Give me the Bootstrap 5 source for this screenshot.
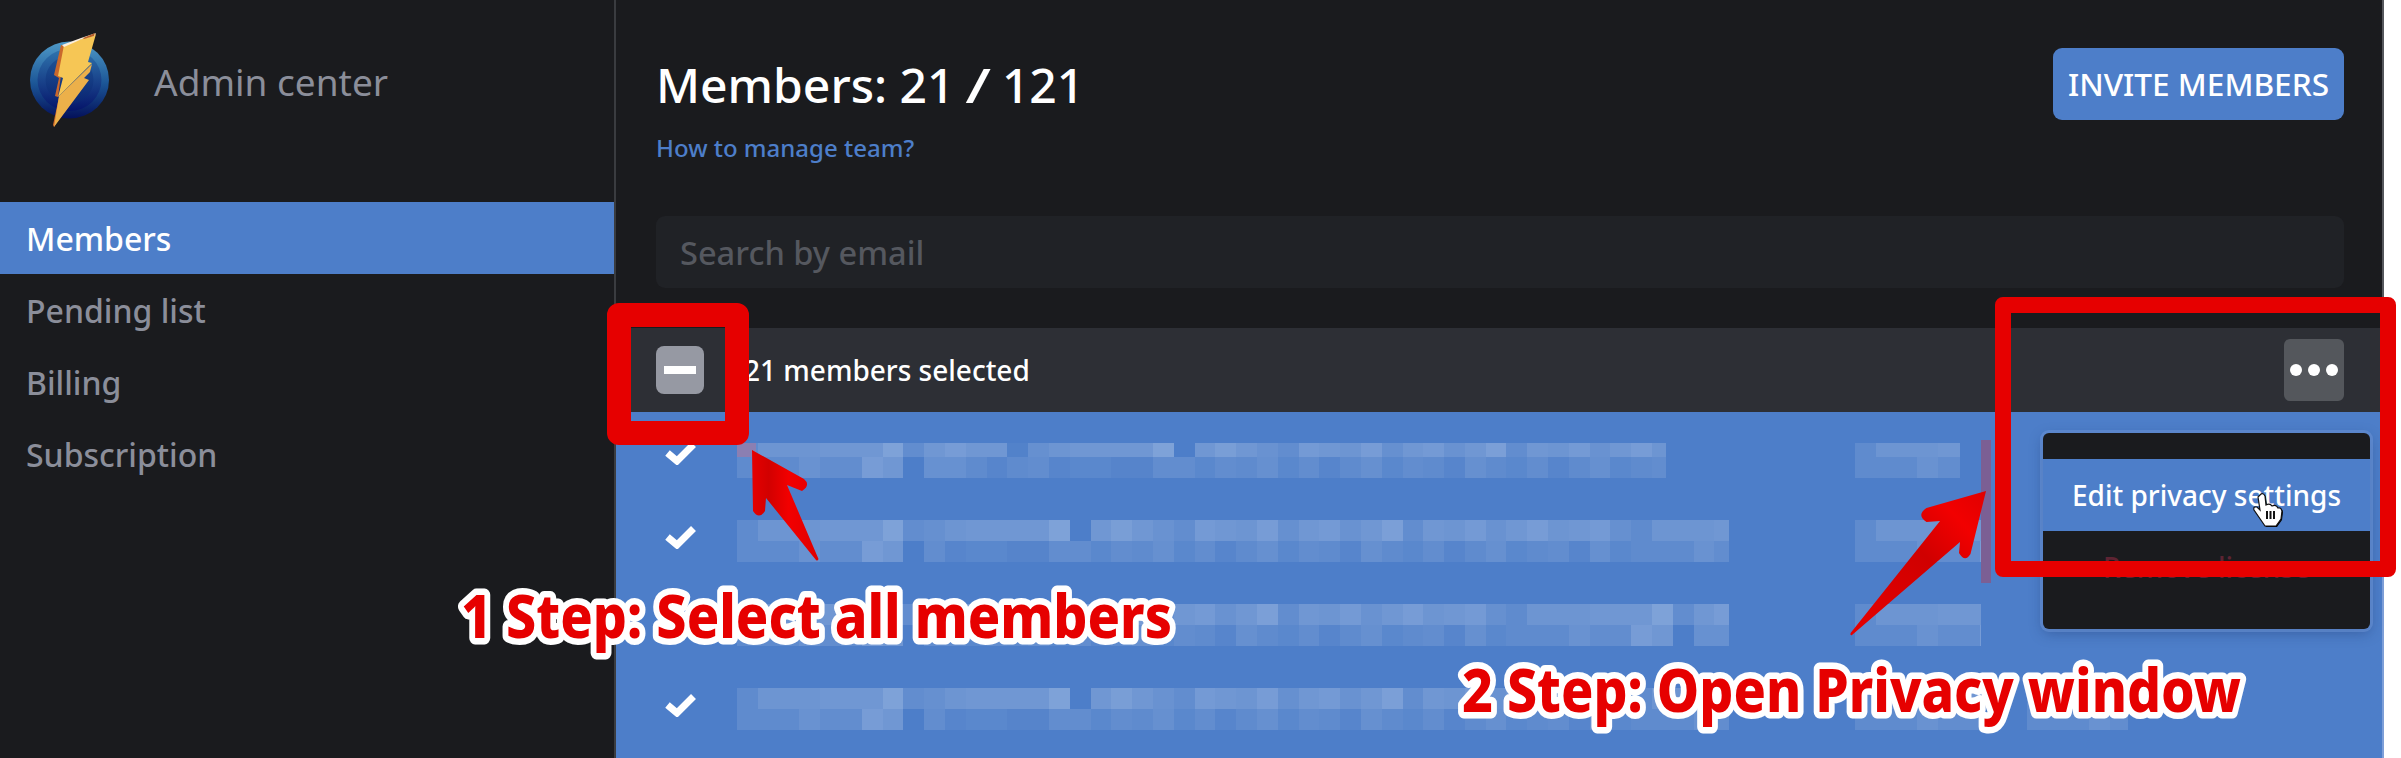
<!doctype html>
<html lang="en">
<head>
<meta charset="utf-8">
<title>Admin center</title>
<link href="https://cdn.jsdelivr.net/npm/bootstrap@5.3.0/dist/css/bootstrap.min.css" rel="stylesheet">
<style>
html,body{height:758px;background:#fff;overflow:hidden}
body{font-family:"Noto Sans","Liberation Sans",sans-serif;position:relative}
.app-shell{width:2384px;height:758px;background:#1a1b1e;overflow:hidden}
.side-col{width:616px;flex:none;border-right:2px solid #3a3c40}
.brand-row{height:202px}
.brand-name{font-size:37px;line-height:54px;color:#8b8e9a;margin:55px 0 0 4px}
.side-nav .nav-link{height:72px;line-height:74px;padding:0 26px;font-size:32px;font-weight:500;color:#8b8e9a;border-radius:0}
.side-nav .nav-link.active{background:#4d7ec9;color:#fff}
.main-col{flex:1 1 auto;min-width:0;border-right:2px solid #55575c;position:relative}
.head-row{padding:48px 38px 0 40px}
.page-title{font-size:48px;line-height:72px;font-weight:500;color:#fff;margin:1px 0 9px}
.title-slash{display:inline-block;transform:scaleX(1.4);margin:0 2px}
.help-link{display:block;font-size:24px;line-height:36px;font-weight:500;color:#4d7ec9;text-decoration:none}
.invite-btn{width:291px;height:72px;padding:0;font-size:31.6px;line-height:1;font-weight:500;color:#fff;background:#4d7ec9;border:0;border-radius:9px;white-space:nowrap}
.search-wrap{margin:50px 38px 0 40px}
.search-box.form-control{height:72px;background:#202226;border:0;border-radius:9px;padding:0 24px;font-size:32.6px;color:#fff}
.search-box.form-control::placeholder{color:#55585f;opacity:1;font-weight:500}
.select-bar{height:84px;margin-top:40px;background:#2d2f35;padding:0 38px 0 40px}
.master-check{width:48px;height:48px;background:#9699a3;border-radius:8px;flex:none}
.master-check i{display:block;width:32px;height:8px;background:#fff}
.select-text{font-size:28px;font-weight:500;color:#fff;margin-left:40px}
.more-btn{width:60px;height:62px;background:#54575c;border:0;border-radius:6px;gap:6px;padding:0}
.more-btn i{display:block;width:12px;height:12px;border-radius:50%;background:#fff}
.member-list{background:#4d7ec9;height:346px;margin-right:-2px;border-right:2px solid #7e9fd8}
.member-row{height:84px}
.check-cell{width:121px;flex:none;padding:29px 0 0 48px}
.check-cell svg{display:block}
.blur-cell{flex:none;padding-top:24px;overflow:hidden}
.first-row .blur-cell{padding-top:31px}
.tile-line{display:flex;height:21px;overflow:hidden}
.first-row .tile-line:first-child{height:14px}
.tile-line span{flex:none;width:20.8px;height:100%;background:#fff}
.action-menu.dropdown-menu{position:absolute;display:block;left:2043px;top:433px;width:327px;height:196px;padding:26px 0;margin:0;background:#1a1b1e;border:0;border-radius:6px;box-shadow:0 0 0 3px rgba(110,150,215,.5),0 4px 14px rgba(20,40,90,.35)}
.action-menu .dropdown-item{height:72px;line-height:72px;padding:0;text-align:center;font-size:28px;font-weight:500;color:#5e2433}
.action-menu .dropdown-item.active{background:#4d7ec9;color:#fff}
.note-layer{position:absolute;left:0;top:0;z-index:1001;pointer-events:none}
.note-text{font-family:"Noto Sans","Liberation Sans",sans-serif;font-weight:800;font-size:60px;fill:#e60000;stroke:#fff;stroke-width:13px;stroke-linejoin:round;paint-order:stroke fill}
</style>
</head>
<body>
<div class="app-shell d-flex">
  <aside class="side-col">
    <div class="brand-row d-flex align-items-start">
      <svg width="150" height="150" viewBox="0 0 150 150" aria-hidden="true">
        <defs>
          <linearGradient id="lgA" x1="0" y1="0" x2="0" y2="1"><stop offset="0" stop-color="#4f9ac8"/><stop offset=".55" stop-color="#1b5596"/><stop offset="1" stop-color="#04105a"/></linearGradient>
          <linearGradient id="lgB" x1="0" y1="0" x2="0" y2="1"><stop offset="0" stop-color="#2f75ae"/><stop offset="1" stop-color="#05146a"/></linearGradient>
          <linearGradient id="lgC" x1="0" y1="0" x2="0" y2="1"><stop offset="0" stop-color="#1f5496"/><stop offset="1" stop-color="#0a2472"/></linearGradient>
        </defs>
        <ellipse cx="69.5" cy="80" rx="39.5" ry="38.5" fill="url(#lgA)"/>
        <ellipse cx="69.5" cy="80" rx="32" ry="31" fill="url(#lgB)"/>
        <ellipse cx="69.5" cy="80" rx="24" ry="24" fill="url(#lgC)"/>
        <polygon points="61,45 54,75 59,78 55,96 58,97 65,46" fill="#c9682c"/>
        <polygon points="59,97 53,125 54,127 63,112" fill="#d0692a"/>
        <polygon points="92,64 59,96 54,127 89,80 84,78 90,72" fill="#ecb04a"/>
        <polygon points="96,34 64,45 58,76 63,78 58,97 92,63 88,62" fill="#f6c655"/>
        <polygon points="62,45 81,38 96,33 94,36 82,39 64,47" fill="#fbeedd"/>
        <polygon points="83,38 95,33 94,36 84,39" fill="#b8602a"/>
      </svg>
      <div class="brand-name">Admin center</div>
    </div>
    <nav class="nav nav-pills flex-column side-nav">
      <a class="nav-link active" href="#">Members</a>
      <a class="nav-link" href="#">Pending list</a>
      <a class="nav-link" href="#">Billing</a>
      <a class="nav-link" href="#">Subscription</a>
    </nav>
  </aside>
  <main class="main-col">
    <div class="head-row d-flex justify-content-between align-items-start">
      <div>
        <h1 class="page-title">Members: 21 <span class="title-slash">/</span> 121</h1>
        <a class="help-link" href="#">How to manage team?</a>
      </div>
      <button class="btn invite-btn" type="button">INVITE MEMBERS</button>
    </div>
    <div class="search-wrap"><input class="form-control search-box" type="text" placeholder="Search by email"></div>
    <div class="select-bar d-flex align-items-center">
      <div class="master-check d-flex align-items-center justify-content-center"><i></i></div>
      <div class="select-text">21 members selected</div>
      <button class="btn more-btn ms-auto d-flex align-items-center justify-content-center" type="button"><i></i><i></i><i></i></button>
    </div>
    <div class="member-list" id="memberList"></div>
  </main>
</div>
<div class="dropdown-menu action-menu">
  <a class="dropdown-item active" href="#">Edit privacy settings</a>
  <a class="dropdown-item" href="#">Remove license</a>
</div>
<svg class="note-layer" width="2401" height="758" viewBox="0 0 2401 758">
  <defs>
    <linearGradient id="arrA" x1="0" y1="0" x2="1" y2="0"><stop offset="0" stop-color="#e60000"/><stop offset=".25" stop-color="#d20000"/><stop offset=".55" stop-color="#f20000"/><stop offset="1" stop-color="#e00000"/></linearGradient>
    <linearGradient id="arrB" x1="0" y1="1" x2="1" y2="0"><stop offset="0" stop-color="#e60000"/><stop offset=".55" stop-color="#d00000"/><stop offset=".8" stop-color="#f20000"/><stop offset="1" stop-color="#e00000"/></linearGradient>
  </defs>
  <rect x="1981" y="440" width="10" height="143" fill="#7b5f94"/>
  <rect x="737" y="443" width="19" height="14" fill="#8b7fb2"/>
  <rect x="619" y="315" width="118" height="118" fill="none" stroke="#e60000" stroke-width="24" stroke-linejoin="round"/>
  <rect x="2003" y="305" width="385" height="264" fill="none" stroke="#e60000" stroke-width="16" stroke-linejoin="round"/>
  <path d="M752 450 L804 479 Q811 485 802 491 L787 485 L818.5 559 Q817.5 561.5 816 560 L766 498 L765 511 Q759 520 753 511 Z" fill="url(#arrA)"/>
  <path d="M1986 491 L1926.5 508 Q1916 515 1926.5 522 L1940 521 L1850.6 633 Q1850 636 1852 635 L1960 542 L1959 553 Q1965 563 1970.5 554 Z" fill="url(#arrB)"/>
  <text class="note-text" x="461" y="638" textLength="711" lengthAdjust="spacingAndGlyphs">1 Step: Select all members</text>
  <text class="note-text" x="1462" y="712" textLength="779" lengthAdjust="spacingAndGlyphs">2 Step: Open Privacy window</text>
  <g transform="translate(2252 493)">
    <path d="M8 2 Q11 -1 13 3 L14 12 Q18 10 20 13 Q24 11 26 15 Q29 14 30 18 L29 26 L24 33 L13 33 L2 17 Q1 13 5 14 L8 17 L6 4 Z" fill="#000" transform="translate(1 1)"/>
    <path d="M8 2 Q11 -1 13 3 L14 12 Q18 10 20 13 Q24 11 26 15 Q29 14 30 18 L29 26 L24 33 L13 33 L2 17 Q1 13 5 14 L8 17 L6 4 Z" fill="#fff" stroke="#111" stroke-width="1.2"/>
    <path d="M15 18V26M18.5 18V26M22 18V26" stroke="#111" stroke-width="2" fill="none"/>
  </g>
</svg>
<script src="https://cdn.jsdelivr.net/npm/bootstrap@5.3.0/dist/js/bootstrap.bundle.min.js"></script>
<script>
var topA=[.10,.18,.18,.18,.2,.2,.2,.28,.12,.2,.24,.2,.2,.03,.14,.18,.2,.2,.2,.2,.28,0,.2,.25,.2,.16,.12,.22,.2,.18,.24,.14,.2,.22,.16,.2,.26,.12,.2,.18,.22,.16,.2,.24,.18,.2,.22,.14];
var botA=[.1,.1,.1,.16,.12,.12,.24,.2,0,.15,.15,.1,.06,.1,.12,.06,.08,.08,.05,.05,.12,.12,.08,.12,.1,.14,.08,.12,.06,.1,.14,.08,.12,.1,.06,.14,.1,.08,.12,.06,.1,.14,.08,.1,.12,.06,.14,.08];
var rows=[
 {len:929,w:[[1855,105]],first:1,shift:0},
 {len:992,w:[[1855,126]],shift:5},
 {len:992,w:[[1855,126]],shift:11},
 {len:992,w:[[1855,126],[2027,101]],shift:5}
];
function tiles(len,shift,width){
  var box=document.createElement('div');box.className='blur-cell';box.style.width=width+'px';
  var count=Math.ceil(len/20.8);
  [topA,botA].forEach(function(src){
    var line=document.createElement('div');line.className='tile-line';line.style.width=len+'px';
    for(var i=0;i<count;i++){var s=document.createElement('span');s.style.opacity=src[(i+(i>8?shift:0))%src.length];line.appendChild(s);}
    box.appendChild(line);
  });
  return box;
}
var host=document.getElementById('memberList');
rows.forEach(function(r){
  var row=document.createElement('div');row.className='member-row d-flex'+(r.first?' first-row':'');
  var c=document.createElement('div');c.className='check-cell';
  c.innerHTML='<svg width="32" height="24" viewBox="0 0 32 24"><path d="M3.5 12 L13 20 L29.5 3.5" fill="none" stroke="#fff" stroke-width="7"/></svg>';
  row.appendChild(c);
  row.appendChild(tiles(r.len,r.shift,1118));
  var x=1855;
  r.w.forEach(function(b){
    var gap=document.createElement('div');gap.style.width=(b[0]-x)+'px';gap.style.flex='none';row.appendChild(gap);
    row.appendChild(tiles(b[1],r.shift+3,b[1]));
    x=b[0]+b[1];
  });
  host.appendChild(row);
});
</script>
</body>
</html>
